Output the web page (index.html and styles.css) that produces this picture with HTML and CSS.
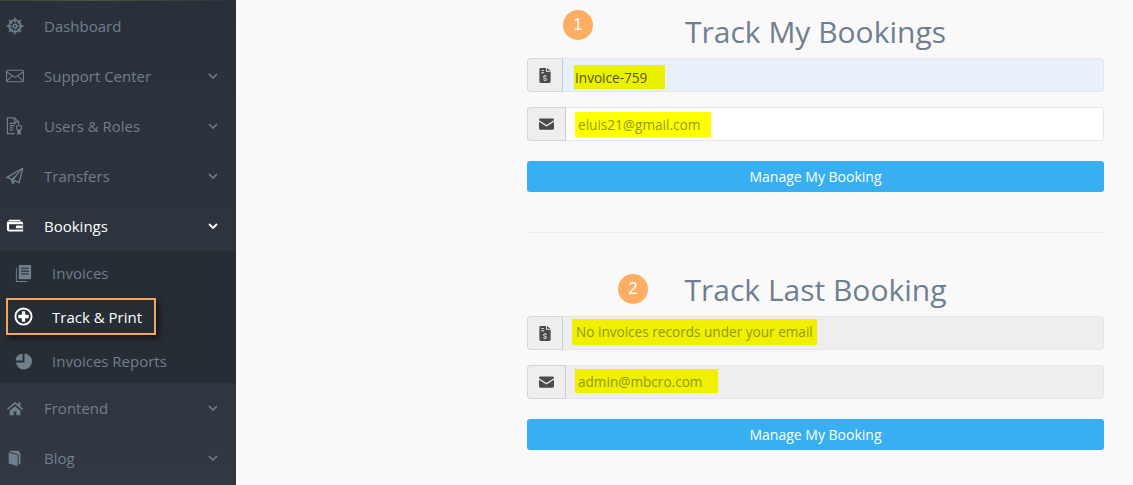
FILE: index.html
```html
<!DOCTYPE html>
<html>
<head>
  <title>Track My Bookings</title>
  <link rel="stylesheet" href="styles.css">
</head>
<body>
  <div class="sidebar">
    <div class="top-strip"></div>
    <div class="nav-item">
      <svg class="nav-icon" viewBox="0 0 20 20"><g fill="none" stroke="currentColor"><circle cx="10" cy="10" r="6.500" stroke-width="2"/><circle cx="10" cy="10" r="2" stroke-width="1.800"/><path d="M10 .5v6M10 13.500v6M.5 10h6M13.500 10h6M3.300 3.300l4 4M12.700 12.700l4 4M16.700 3.300l-4 4M7.300 12.700l-4 4" stroke-width="1.400"/></g></svg>
      <span class="nav-label">Dashboard</span>
    </div>
    <div class="nav-item">
      <svg class="nav-icon" viewBox="0 0 20 20"><g fill="none" stroke="currentColor" stroke-width="1.200"><rect x=".6" y="3.600" width="18.800" height="12.800" rx="1.200"/><path d="M1 5.500l9 6 9-6M1 15.500l6.500-6M19 15.500l-6.500-6"/></g></svg>
      <span class="nav-label">Support Center</span>
      <svg class="chevron" viewBox="0 0 10 6"><path d="M1 1l4 4 4-4" fill="none" stroke="currentColor" stroke-width="1.600"/></svg>
    </div>
    <div class="nav-item">
      <svg class="nav-icon" viewBox="0 0 20 20"><g fill="none" stroke="currentColor" stroke-width="1.300"><path d="M9.500 18.500H1.500V1h8l4.500 4.500v3"/><path d="M9.500 1v4.500H14M4 7h7M4 9.500h5.500M4 12h4M4 14.500h4"/><circle cx="14.500" cy="12" r="2.800"/></g><path d="M12.500 14.500v5.500l2-1.200 2 1.200v-5.500z" fill="currentColor"/></svg>
      <span class="nav-label">Users &amp; Roles</span>
      <svg class="chevron" viewBox="0 0 10 6"><path d="M1 1l4 4 4-4" fill="none" stroke="currentColor" stroke-width="1.600"/></svg>
    </div>
    <div class="nav-item">
      <svg class="nav-icon" viewBox="0 0 20 20"><path d="M18.500 1.500L1 11.500l5 2 1.500 5 2.500-3.500 4.500 2.500z" fill="none" stroke="currentColor" stroke-width="1.500" stroke-linejoin="round"/><path d="M18.500 1.500L6 13.500l1.500 5 1-4z" fill="currentColor"/></svg>
      <span class="nav-label">Transfers</span>
      <svg class="chevron" viewBox="0 0 10 6"><path d="M1 1l4 4 4-4" fill="none" stroke="currentColor" stroke-width="1.600"/></svg>
    </div>
    <div class="nav-item nav-open">
      <svg class="nav-icon" viewBox="0 0 20 20"><path d="M3 3h13v1.500H3zM2 5h15a2 2 0 0 1 2 2v9H3a2 2 0 0 1-2-2V6a1 1 0 0 1 1-1z" fill="currentColor"/><path d="M3.500 8h15v6h-15z" fill="#2c333c"/><path d="M11 9.500h7.500v3H11z" fill="currentColor"/></svg>
      <span class="nav-label">Bookings</span>
      <svg class="chevron" viewBox="0 0 10 6"><path d="M1 1l4 4 4-4" fill="none" stroke="currentColor" stroke-width="1.800"/></svg>
    </div>
    <div class="submenu">
      <div class="sub-item">
        <svg class="sub-icon" viewBox="0 0 18 20"><path d="M2 4H1v15h12v-1H2z" fill="currentColor"/><path d="M4 1h13v15H4z" fill="currentColor"/><path d="M6.500 4.500h8M6.500 7.500h8M6.500 10.500h8" stroke="#272d35" stroke-width="1.200"/></svg>
        <span>Invoices</span>
      </div>
      <div class="sub-item sub-current">
        <svg class="sub-icon" viewBox="0 0 20 20"><circle cx="10" cy="10" r="8.500" fill="none" stroke="currentColor" stroke-width="2"/><path d="M10 4.500v11M4.500 10h11" stroke="currentColor" stroke-width="3.500"/></svg>
        <span>Track &amp; Print</span>
      </div>
      <div class="sub-item">
        <svg class="sub-icon" viewBox="0 0 20 20"><path d="M11 1.500a8.500 8.500 0 1 1-9 9.500h9z" fill="currentColor"/><path d="M9 1.500V9H1.500A8 8 0 0 1 9 1.500z" fill="currentColor"/></svg>
        <span>Invoices Reports</span>
      </div>
    </div>
    <div class="nav-item">
      <svg class="nav-icon" viewBox="0 0 20 20"><path d="M10 3L1 11l1 1.200L10 5.500l8 6.700 1-1.200-3-2.700V4h-2.500v2.200zM4 13l6-5 6 5v5h-4.500v-4h-3v4H4z" fill="currentColor"/></svg>
      <span class="nav-label">Frontend</span>
      <svg class="chevron" viewBox="0 0 10 6"><path d="M1 1l4 4 4-4" fill="none" stroke="currentColor" stroke-width="1.600"/></svg>
    </div>
    <div class="nav-item">
      <svg class="nav-icon" viewBox="0 0 20 20"><path d="M3 4l10 3v12L3 16z" fill="currentColor"/><path d="M4 2h10l2 3v12h-2V6L4 3z" fill="currentColor"/></svg>
      <span class="nav-label">Blog</span>
      <svg class="chevron" viewBox="0 0 10 6"><path d="M1 1l4 4 4-4" fill="none" stroke="currentColor" stroke-width="1.600"/></svg>
    </div>
  </div>

  <div class="main">
    <div class="track-col">
      <div class="track-form">
        <span class="step-badge step-one">1</span>
        <h2 class="track-title">Track My Bookings</h2>
        <div class="field">
          <div class="field-addon">
            <svg class="addon-icon" viewBox="0 0 12 16"><path d="M0 1.500A1.500 1.500 0 0 1 1.500 0H7v4h5v10.500a1.500 1.500 0 0 1-1.500 1.500h-9A1.500 1.500 0 0 1 0 14.500zM8 0l4 3H8zM2 2v1h3V2zm0 2.500v1h3v-1z" fill="currentColor"/><path d="M6 7.500v1M6 13v1M7.800 9.200C7.500 8.700 7 8.500 6 8.500c-1 0-1.700.4-1.700 1.200 0 1.600 3.500.8 3.500 2.300 0 .8-.8 1.100-1.800 1.100s-1.600-.3-1.900-.9" fill="none" stroke="#f0f0f0" stroke-width="1"/></svg>
          </div>
          <div class="field-input input-filled"><span class="mark mark-invoice">Invoice-759</span></div>
        </div>
        <div class="field">
          <div class="field-addon addon-wide">
            <svg class="addon-icon icon-mail" viewBox="0 0 16 12"><path d="M1.500 0h13A1.500 1.500 0 0 1 16 1.500v.5L8 7 0 2v-.5A1.500 1.500 0 0 1 1.500 0zM0 3.600l8 5 8-5v6.900a1.500 1.500 0 0 1-1.500 1.500h-13A1.500 1.500 0 0 1 0 10.500z" fill="currentColor"/></svg>
          </div>
          <div class="field-input input-white"><span class="mark mark-email">eluis21@gmail.com</span></div>
        </div>
        <button class="manage-btn">Manage My Booking</button>
      </div>

      <div class="divider"></div>

      <div class="track-form">
        <span class="step-badge step-two">2</span>
        <h2 class="track-title">Track Last Booking</h2>
        <div class="field">
          <div class="field-addon">
            <svg class="addon-icon" viewBox="0 0 12 16"><path d="M0 1.500A1.500 1.500 0 0 1 1.500 0H7v4h5v10.500a1.500 1.500 0 0 1-1.500 1.500h-9A1.500 1.500 0 0 1 0 14.500zM8 0l4 3H8zM2 2v1h3V2zm0 2.500v1h3v-1z" fill="currentColor"/><path d="M6 7.500v1M6 13v1M7.800 9.200C7.500 8.700 7 8.500 6 8.500c-1 0-1.700.4-1.700 1.200 0 1.600 3.500.8 3.500 2.300 0 .8-.8 1.100-1.800 1.100s-1.600-.3-1.900-.9" fill="none" stroke="#f0f0f0" stroke-width="1"/></svg>
          </div>
          <div class="field-input input-off"><span class="mark mark-none">No invoices records under your email</span></div>
        </div>
        <div class="field">
          <div class="field-addon addon-wide">
            <svg class="addon-icon icon-mail" viewBox="0 0 16 12"><path d="M1.500 0h13A1.500 1.500 0 0 1 16 1.500v.5L8 7 0 2v-.5A1.500 1.500 0 0 1 1.500 0zM0 3.600l8 5 8-5v6.900a1.500 1.500 0 0 1-1.500 1.500h-13A1.500 1.500 0 0 1 0 10.500z" fill="currentColor"/></svg>
          </div>
          <div class="field-input input-off"><span class="mark mark-admin">admin@mbcro.com</span></div>
        </div>
        <button class="manage-btn">Manage My Booking</button>
      </div>
    </div>
  </div>
</body>
</html>
```

FILE: styles.css
```css
html, body {
  height: 100%;
}

body {
  margin: 0;
  display: flex;
  overflow: hidden;
  background-color: #f9f9f9;
  font-family: 'Open Sans', sans-serif;
  font-size: 14px;
}

/* Sidebar */
.sidebar {
  width: 236px;
  flex-shrink: 0;
  background: linear-gradient(180deg, #29303a 0%, #2d343d 50%, #313842 100%);
  color: #6f7f8e;
}

.top-strip {
  height: 1px;
  background: linear-gradient(90deg, #3a4a35, #4a5540 40%, #2c333c);
}

.nav-item {
  display: flex;
  align-items: center;
  height: 50px;
  padding: 0 18px 0 6px;
  box-sizing: border-box;
}

.nav-open {
  color: #fff;
}

.nav-icon {
  width: 18px;
  height: 18px;
  flex-shrink: 0;
}

.nav-label {
  flex: 1;
  margin-left: 20px;
  font-size: 15px;
}

.nav-open .nav-label {
  font-weight: 500;
}

.chevron {
  width: 10px;
  height: 6px;
}

.submenu {
  height: 132px;
  background-color: #272d35;
}

.sub-item {
  display: flex;
  align-items: center;
  height: 44px;
  padding-left: 14px;
  font-size: 15px;
}

.sub-icon {
  width: 19px;
  height: 19px;
  margin-right: 19px;
  flex-shrink: 0;
}

/* annotation box round the current page */
.sub-current {
  height: 37px;
  margin: 3px 80px 4px 6px;
  padding-left: 6px;
  border: 2px solid #f6a55f;
  box-sizing: border-box;
  box-shadow: 3px 3px 6px rgba(0, 0, 0, 0.55);
  color: #fff;
  font-weight: 500;
}

/* Main */
.main {
  flex: 1;
  padding-left: 291px;
}

.track-col {
  width: 577px;
}

.track-form {
  position: relative;
  display: flex;
  flex-direction: column;
}

.track-title {
  margin: 0 0 6px;
  height: 52px;
  line-height: 64px;
  text-align: center;
  font-size: 30px;
  font-weight: 400;
  color: #6f7f8f;
}

.step-badge {
  position: absolute;
  width: 30px;
  height: 30px;
  border-radius: 50%;
  background-color: #fdae64;
  color: #fff;
  text-align: center;
  line-height: 30px;
  font-family: 'Liberation Sans', sans-serif;
  font-size: 16px;
}

.step-one {
  left: 36px;
  top: 10px;
}

.step-two {
  left: 91px;
  top: 16px;
}

.field {
  display: flex;
  height: 34px;
  margin-bottom: 15px;
}

.field-addon {
  width: 36px;
  flex-shrink: 0;
  display: flex;
  align-items: center;
  justify-content: center;
  background-color: #eeeeee;
  border: 1px solid #d5d5d5;
  border-right: 1px solid #cccccc;
  border-radius: 4px 0 0 4px;
  box-sizing: border-box;
  color: #4a4a4f;
}

.addon-wide {
  width: 39px;
}

.addon-icon {
  width: 12px;
  height: 15px;
}

.icon-mail {
  width: 15px;
  height: 12px;
}

.field-input {
  flex: 1;
  display: flex;
  align-items: center;
  border: 1px solid #e6e6e6;
  border-left: none;
  border-radius: 0 4px 4px 0;
}

.input-filled {
  background-color: #e8f0fc;
}

.input-white {
  background-color: #fff;
}

.input-off {
  background-color: #eeeeee;
}

.mark {
  display: flex;
  align-items: center;
  box-sizing: border-box;
  background-color: #f0f000;
  color: #8f9a10;
  font-size: 13.600px;
}

.mark-invoice {
  width: 91px;
  height: 24px;
  margin: 4px 0 0 11px;
  padding-left: 1px;
  background-color: #ebf000;
  color: #555a08;
}

.mark-email {
  width: 136px;
  height: 25px;
  margin-left: 9px;
  padding-left: 3px;
  background-color: #ffff00;
}

.mark-none {
  width: 245px;
  height: 26px;
  margin: 0 0 3px 9px;
  padding-left: 4px;
}

.mark-admin {
  width: 143px;
  height: 24px;
  margin: 0 0 2px 9px;
  padding-left: 3px;
}

.manage-btn {
  height: 31px;
  margin-top: 5px;
  border: none;
  border-radius: 3px;
  background-color: #38aff1;
  color: #fff;
  font-family: 'Open Sans', sans-serif;
  font-size: 14px;
  font-weight: 500;
}

.divider {
  height: 1px;
  margin: 40px 0 25px;
  background-color: #ececec;
}
```
